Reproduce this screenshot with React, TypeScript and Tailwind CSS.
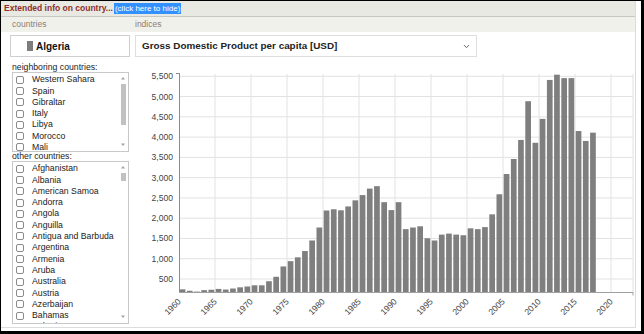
import { ChevronDown } from 'lucide-react';

const neighbors = ['Western Sahara', 'Spain', 'Gibraltar', 'Italy', 'Libya', 'Morocco', 'Mali'];

const others = [
  'Afghanistan', 'Albania', 'American Samoa', 'Andorra', 'Angola', 'Anguilla', 'Antigua and Barbuda',
  'Argentina', 'Armenia', 'Aruba', 'Australia', 'Austria', 'Azerbaijan', 'Bahamas', 'Bahrain',
];

// GDP per capita, 1960..2017
const gdp = [
  245, 210, 190, 225, 235, 255, 240, 265, 295, 315, 345, 345, 445, 555, 810, 940, 1035, 1190, 1450, 1770,
  2190, 2220, 2195, 2290, 2440, 2570, 2730, 2790, 2395, 2200, 2395, 1730, 1770, 1800, 1505, 1450, 1595, 1620,
  1595, 1580, 1750, 1730, 1780, 2095, 2590, 3090, 3460, 3930, 4885, 3860, 4450, 5410, 5540, 5455, 5455, 4150,
  3905, 4110,
];

const yv = (v: number) => 77.3 + (5500 - v) * 0.04054;
const xy = (year: number) => 180 + (year - 1960) * 7.2;
const base = 293;

const yTicks = [500, 1000, 1500, 2000, 2500, 3000, 3500, 4000, 4500, 5000, 5500];
const xTicks = [1960, 1965, 1970, 1975, 1980, 1985, 1990, 1995, 2000, 2005, 2010, 2015, 2020];

const Arrow = ({ up }: { up?: boolean }) => (
  <svg width="6" height="4" viewBox="0 0 6 4" className="mx-auto">
    <path d={up ? 'M1 3.5 L3 1 L5 3.5 Z' : 'M1 0.5 L3 3 L5 0.5 Z'} fill="#a3a3a3" />
  </svg>
);

const CountryList = ({
  items,
  height,
  thumbTop,
  thumbHeight,
}: {
  items: string[];
  height: string;
  thumbTop: string;
  thumbHeight: string;
}) => (
  <div className={`flex border border-[#c9c9c9] bg-white overflow-hidden ${height}`}>
    <div className="flex-1 flex flex-col pt-[1px] overflow-hidden">
      {items.map((name) => (
        <div key={name} className="h-[11.3px] shrink-0 flex items-center">
          <span className="w-[8px] h-[8px] shrink-0 border border-[#8a8a8a] rounded-[2px] ml-[3px] mr-[8px] bg-white" />
          <span className="text-[8.7px] leading-none text-[#222] whitespace-nowrap">{name}</span>
        </div>
      ))}
    </div>
    <div className="w-[8px] flex flex-col pt-[3px] pb-[4px] mr-[1px]">
      <Arrow up />
      <div className={`w-[5px] mx-auto bg-[#c1c1c1] ${thumbTop} ${thumbHeight}`} />
      <div className="flex-1" />
      <Arrow />
    </div>
  </div>
);

const Chart = () => (
  <svg width="503" height="267" viewBox="133 60 503 267" className="block">
    {yTicks.map((v) => (
      <line key={v} x1={180} x2={634} y1={yv(v)} y2={yv(v)} stroke="#e2e2e2" strokeWidth="1" />
    ))}
    {xTicks.slice(1).map((yr) => (
      <line key={yr} x1={xy(yr)} x2={xy(yr)} y1={75} y2={base} stroke="#e2e2e2" strokeWidth="1" />
    ))}
    <line x1={634} x2={634} y1={75} y2={base} stroke="#e2e2e2" />
    {gdp.map((v, i) => {
      const top = yv(v);
      if (top >= base) return null;
      return <rect key={i} x={xy(1960 + i) + 0.7} y={top} width={5.7} height={base - top} fill="#7f7f7f" />;
    })}
    <line x1={180.5} x2={180.5} y1={74} y2={base} stroke="#8c8c8c" />
    <line x1={177} x2={180.5} y1={74.5} y2={74.5} stroke="#8c8c8c" />
    <line x1={180} x2={634} y1={base + 0.5} y2={base + 0.5} stroke="#a0a0a0" />
    <line x1={634} x2={634} y1={base} y2={base + 3.5} stroke="#a0a0a0" />
    {yTicks.map((v) => (
      <text
        key={v}
        x={174}
        y={yv(v) + 3}
        textAnchor="end"
        fontSize="8.6"
        fill="#444"
        fontFamily="'Liberation Sans', Arial, sans-serif"
      >
        {v.toLocaleString('en-US')}
      </text>
    ))}
    {xTicks.map((yr) => (
      <text
        key={yr}
        x={0}
        y={0}
        textAnchor="end"
        fontSize="8.6"
        fill="#444"
        fontFamily="'Liberation Sans', Arial, sans-serif"
        transform={`translate(${xy(yr) + 2.5} ${base + 10}) rotate(-45)`}
      >
        {yr}
      </text>
    ))}
  </svg>
);

const App = () => {
  return (
    <div className="w-[644px] h-[334px] bg-black pt-[1px] pl-[1px] pr-[3px] pb-[3px] font-['Liberation_Sans',Arial,sans-serif]">
      <div className="w-full h-full bg-white">
        <div className="w-[635px] h-[327px] border-r border-b border-[#dcdcdc] flex flex-col">
          {/* header */}
          <div className="h-[16px] shrink-0 bg-[#e9e9e3] border-b border-[#c8c8c0] flex items-center pl-[3px]">
            <span className="text-[8.5px] font-bold text-[#8b2f2f] leading-none">Extended info on country...</span>
            <span className="ml-[1px] text-[8px] leading-[11px] px-[1px] bg-[#3391ff] text-white">(click here to hide)</span>
          </div>

          {/* labels */}
          <div className="h-[15px] shrink-0 bg-[#f1f1ec] flex items-center text-[8.5px] text-[#8f7d72]">
            <span className="ml-[11px] w-[123px]">countries</span>
            <span>indices</span>
          </div>

          {/* controls */}
          <div className="flex shrink-0 pt-[3px] h-[28px]">
            <div className="ml-[9px] w-[120px] h-[22px] border border-[#cfcfcf] bg-white flex items-center">
              <span className="ml-[16px] w-[6px] h-[10px] bg-[#7d7d7d]" />
              <span className="ml-[3px] text-[10px] font-bold text-[#111]">Algeria</span>
            </div>
            <div className="ml-[5px] w-[342px] h-[22px] border border-[#dedede] bg-white flex items-center justify-between pl-[6px] pr-[5px]">
              <span className="text-[9.9px] font-bold text-[#222]">Gross Domestic Product per capita [USD]</span>
              <ChevronDown size={9} strokeWidth={2.5} color="#555" />
            </div>
          </div>

          {/* main */}
          <div className="flex flex-1 min-h-0">
            <div className="ml-[11px] w-[118px] flex flex-col pt-[2px]">
              <div className="h-[10px] leading-[10px] text-[8.7px] text-[#222]">neighboring countries:</div>
              <CountryList items={neighbors} height="h-[80px]" thumbTop="mt-[4px]" thumbHeight="h-[41px]" />
              <div className="h-[9px] leading-[9px] text-[8.7px] text-[#222]">other countries:</div>
              <CountryList items={others} height="h-[163px]" thumbTop="mt-[4px]" thumbHeight="h-[8px]" />
            </div>
            <div className="ml-[3px] -mt-[1px]">
              <Chart />
            </div>
          </div>
        </div>
      </div>
    </div>
  );
};

export default App;
